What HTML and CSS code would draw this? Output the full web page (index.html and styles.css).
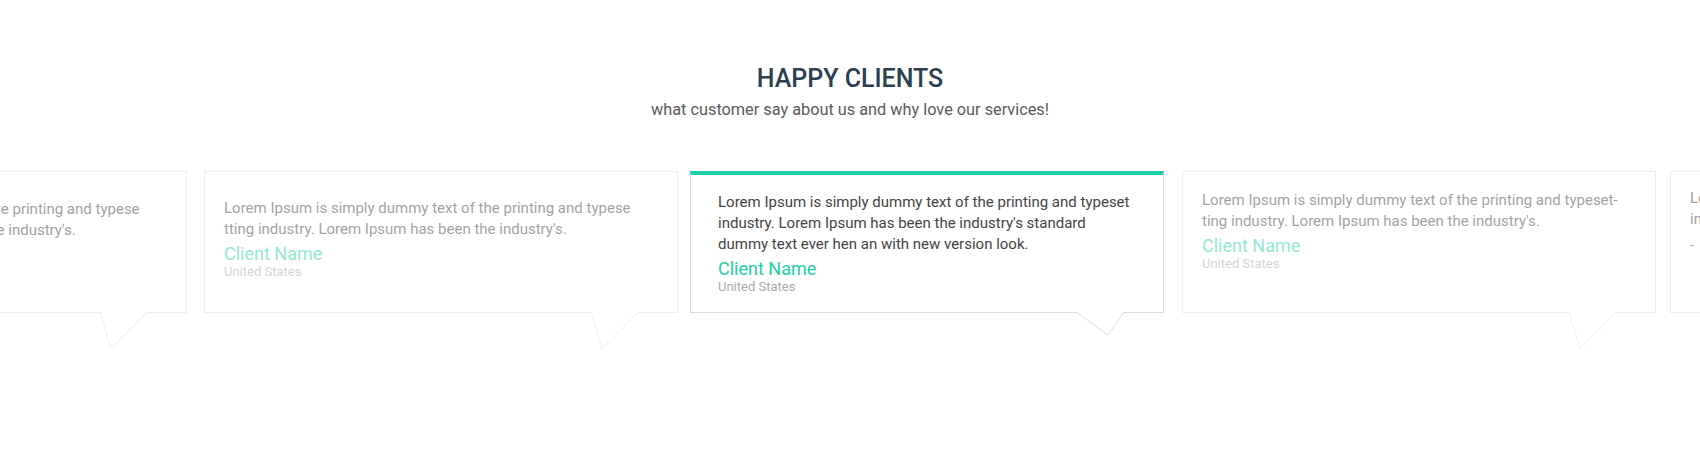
FILE: index.html
```html
<!DOCTYPE html>
<html lang="en">
<head>
<meta charset="utf-8">
<title>Happy Clients</title>
<link rel="stylesheet" href="styles.css">
</head>
<body>
<section class="clients">
  <header class="clients-head">
    <h2 class="clients-title">HAPPY CLIENTS</h2>
    <p class="clients-sub">what customer say about us and why love our services!</p>
  </header>
  <div class="track">
    <div class="card card-1">
      <p class="quote">Lorem Ipsum is simply dummy text of the printing and typese tting industry. Lorem Ipsum has been the industry's.</p>
      <p class="name">Client Name</p>
      <p class="place">United States</p>
      <svg class="tail" width="50" height="40" viewBox="0 0 50 40"><path d="M1 0 L12 37 L48 0 Z" fill="#fff"/><polyline points="1,0 12,37 48,0" fill="none" stroke="#ddd" stroke-width="1"/></svg>
    </div>
    <div class="card card-2">
      <p class="quote">Lorem Ipsum is simply dummy text of the printing and typese tting industry. Lorem Ipsum has been the industry's.</p>
      <p class="name">Client Name</p>
      <p class="place">United States</p>
      <svg class="tail" width="50" height="40" viewBox="0 0 50 40"><path d="M1 0 L12 37 L48 0 Z" fill="#fff"/><polyline points="1,0 12,37 48,0" fill="none" stroke="#ddd" stroke-width="1"/></svg>
    </div>
    <div class="card card-active">
      <p class="quote">Lorem Ipsum is simply dummy text of the printing and typeset industry. Lorem Ipsum has been the industry's standard<br>dummy text ever hen an with new version look.</p>
      <p class="name">Client Name</p>
      <p class="place">United States</p>
      <svg class="tail" width="50" height="26" viewBox="0 0 50 26"><path d="M0 0 L32 23 L48 0 Z" fill="#fff"/><polyline points="0,0 32,23 48,0" fill="none" stroke="#ddd" stroke-width="1"/></svg>
    </div>
    <div class="card card-4">
      <p class="quote">Lorem Ipsum is simply dummy text of the printing and typeset-ting industry. Lorem Ipsum has been the industry's.</p>
      <p class="name">Client Name</p>
      <p class="place">United States</p>
      <svg class="tail" width="50" height="40" viewBox="0 0 50 40"><path d="M1 0 L12 37 L48 0 Z" fill="#fff"/><polyline points="1,0 12,37 48,0" fill="none" stroke="#ddd" stroke-width="1"/></svg>
    </div>
    <div class="card card-5">
      <p class="quote">Lorem Ipsum is simply dummy text of the printing and typeset industry. Lorem Ipsum has been the industry's standard.</p>
      <p class="name"><span class="dash">-</span></p>
    </div>
  </div>
</section>
</body>
</html>
```
FILE: styles.css
```css
* { box-sizing: border-box; }
html, body { margin: 0; padding: 0; background: #fff; }
body {
  font-family: Roboto, "Liberation Sans", Arial, sans-serif;
  width: 1700px;
  height: 454px;
  overflow: hidden;
}
.clients { padding-top: 64px; }
.clients-head { text-align: center; }
.clients-title {
  margin: 0;
  font-size: 25px;
  line-height: 30px;
  font-weight: 500;
  color: #2c3e50;
}
.clients-sub {
  margin: 6px 0 0;
  font-size: 16.3px;
  line-height: 20px;
  color: #5a5a5a;
}
.track {
  display: flex;
  margin-top: 51px;
  margin-left: -287px;
}
.card {
  position: relative;
  flex: 0 0 474px;
  height: 142px;
  border: 1px solid #ddd;
  background: #fff;
  padding: 26px 19px 0 19px;
  margin-right: 17px;
  opacity: 0.5;
}
.card-1 { padding-top: 27px; }
.card-2 { padding-top: 26px; }
.card-4 { padding-top: 18px; margin-right: 14px; }
.card-5 { padding-top: 16px; }
.card-active {
  opacity: 1;
  border-top: 4px solid #1fcfa6;
  padding: 17px 20px 0 27px;
  margin-left: -5px;
  margin-right: 18px;
}
.quote {
  margin: 0;
  font-size: 15px;
  line-height: 21px;
  color: #444;
}
.name {
  margin: 3px 0 0;
  font-size: 18px;
  line-height: 22px;
  color: #1fcfa6;
}
.place {
  margin: 0;
  font-size: 13px;
  line-height: 14px;
  color: #aaa;
}
.dash { color: #e9407a; font-size: 15px; }
.tail {
  position: absolute;
  top: 100%;
  left: 385px;
  display: block;
}
```
